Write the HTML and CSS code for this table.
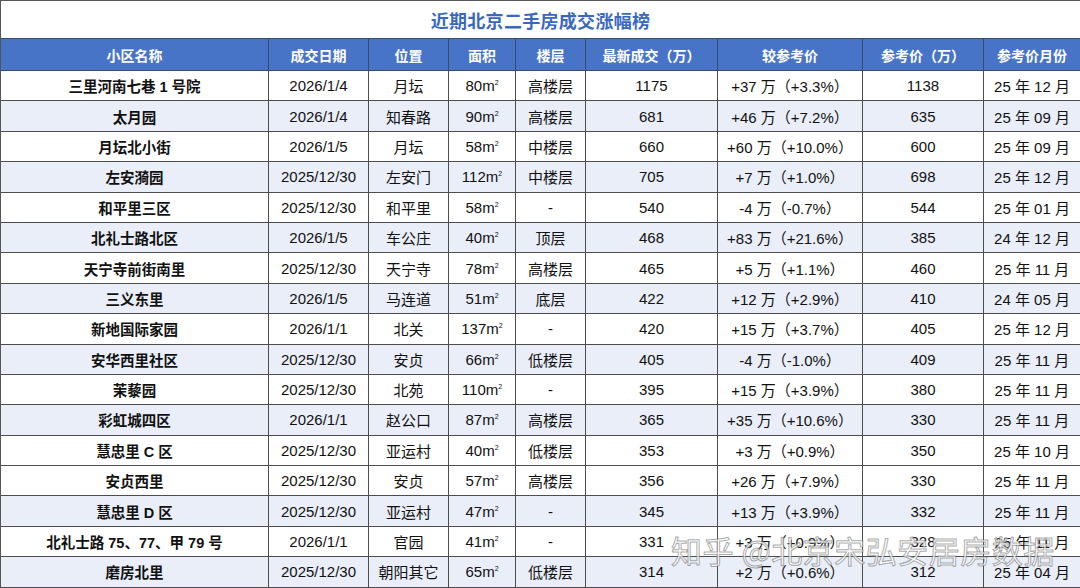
FILE: index.html
```html
<!DOCTYPE html>
<html lang="zh-CN">
<head>
<meta charset="utf-8">
<link rel="stylesheet" href="styles.css">
</head>
<body>
<div class="sheet">
  <div class="title">近期北京二手房成交涨幅榜</div>
  <table class="grid">
    <colgroup>
      <col class="c1"><col class="c2"><col class="c3"><col class="c4"><col class="c5"><col class="c6"><col class="c7"><col class="c8"><col class="c9">
    </colgroup>
    <thead>
      <tr><th>小区名称</th><th>成交日期</th><th>位置</th><th>面积</th><th>楼层</th><th>最新成交（万）</th><th>较参考价</th><th>参考价（万）</th><th>参考价月份</th></tr>
    </thead>
    <tbody>
      <tr><td class="name">三里河南七巷 1 号院</td><td>2026/1/4</td><td>月坛</td><td>80m<sup>2</sup></td><td>高楼层</td><td>1175</td><td>+37 万（+3.3%）</td><td>1138</td><td>25 年 12 月</td></tr>
      <tr class="alt"><td class="name">太月园</td><td>2026/1/4</td><td>知春路</td><td>90m<sup>2</sup></td><td>高楼层</td><td>681</td><td>+46 万（+7.2%）</td><td>635</td><td>25 年 09 月</td></tr>
      <tr><td class="name">月坛北小街</td><td>2026/1/5</td><td>月坛</td><td>58m<sup>2</sup></td><td>中楼层</td><td>660</td><td>+60 万（+10.0%）</td><td>600</td><td>25 年 09 月</td></tr>
      <tr class="alt"><td class="name">左安漪园</td><td>2025/12/30</td><td>左安门</td><td>112m<sup>2</sup></td><td>中楼层</td><td>705</td><td>+7 万（+1.0%）</td><td>698</td><td>25 年 12 月</td></tr>
      <tr><td class="name">和平里三区</td><td>2025/12/30</td><td>和平里</td><td>58m<sup>2</sup></td><td>-</td><td>540</td><td>-4 万（-0.7%）</td><td>544</td><td>25 年 01 月</td></tr>
      <tr class="alt"><td class="name">北礼士路北区</td><td>2026/1/5</td><td>车公庄</td><td>40m<sup>2</sup></td><td>顶层</td><td>468</td><td>+83 万（+21.6%）</td><td>385</td><td>24 年 12 月</td></tr>
      <tr><td class="name">天宁寺前街南里</td><td>2025/12/30</td><td>天宁寺</td><td>78m<sup>2</sup></td><td>高楼层</td><td>465</td><td>+5 万（+1.1%）</td><td>460</td><td>25 年 11 月</td></tr>
      <tr class="alt"><td class="name">三义东里</td><td>2026/1/5</td><td>马连道</td><td>51m<sup>2</sup></td><td>底层</td><td>422</td><td>+12 万（+2.9%）</td><td>410</td><td>24 年 05 月</td></tr>
      <tr><td class="name">新地国际家园</td><td>2026/1/1</td><td>北关</td><td>137m<sup>2</sup></td><td>-</td><td>420</td><td>+15 万（+3.7%）</td><td>405</td><td>25 年 12 月</td></tr>
      <tr class="alt"><td class="name">安华西里社区</td><td>2025/12/30</td><td>安贞</td><td>66m<sup>2</sup></td><td>低楼层</td><td>405</td><td>-4 万（-1.0%）</td><td>409</td><td>25 年 11 月</td></tr>
      <tr><td class="name">茉藜园</td><td>2025/12/30</td><td>北苑</td><td>110m<sup>2</sup></td><td>-</td><td>395</td><td>+15 万（+3.9%）</td><td>380</td><td>25 年 11 月</td></tr>
      <tr class="alt"><td class="name">彩虹城四区</td><td>2026/1/1</td><td>赵公口</td><td>87m<sup>2</sup></td><td>高楼层</td><td>365</td><td>+35 万（+10.6%）</td><td>330</td><td>25 年 11 月</td></tr>
      <tr><td class="name">慧忠里 C 区</td><td>2025/12/30</td><td>亚运村</td><td>40m<sup>2</sup></td><td>低楼层</td><td>353</td><td>+3 万（+0.9%）</td><td>350</td><td>25 年 10 月</td></tr>
      <tr><td class="name">安贞西里</td><td>2025/12/30</td><td>安贞</td><td>57m<sup>2</sup></td><td>高楼层</td><td>356</td><td>+26 万（+7.9%）</td><td>330</td><td>25 年 11 月</td></tr>
      <tr class="alt"><td class="name">慧忠里 D 区</td><td>2025/12/30</td><td>亚运村</td><td>47m<sup>2</sup></td><td>-</td><td>345</td><td>+13 万（+3.9%）</td><td>332</td><td>25 年 11 月</td></tr>
      <tr><td class="name">北礼士路 75、77、甲 79 号</td><td>2026/1/1</td><td>官园</td><td>41m<sup>2</sup></td><td>-</td><td>331</td><td>+3 万（+0.9%）</td><td>328</td><td>25 年 11 月</td></tr>
      <tr class="alt"><td class="name">磨房北里</td><td>2025/12/30</td><td>朝阳其它</td><td>65m<sup>2</sup></td><td>低楼层</td><td>314</td><td>+2 万（+0.6%）</td><td>312</td><td>25 年 04 月</td></tr>
    </tbody>
  </table>
  <div class="watermark">知乎 @北京宋弘安居房数据</div>
</div>
</body>
</html>
```
FILE: styles.css
```css
html, body {
  margin: 0;
  padding: 0;
  background: #ffffff;
}
body {
  font-family: "Liberation Sans", "Noto Sans CJK SC", sans-serif;
  color: #111;
}
.sheet {
  position: relative;
  width: 1080px;
  height: 588px;
  box-sizing: border-box;
  border-left: 1px solid #555;
  border-top: 1px solid #555;
  overflow: hidden;
}
.title {
  height: 37px;
  display: flex;
  align-items: center;
  justify-content: center;
  font-size: 18px;
  font-weight: bold;
  color: #3a68c0;
  letter-spacing: 0.3px;
}
.grid {
  width: 1080px;
  border-collapse: collapse;
  table-layout: fixed;
  margin-left: -1px;
}
.c1 { width: 268px; }
.c2 { width: 100px; }
.c3 { width: 80px; }
.c4 { width: 67px; }
.c5 { width: 70px; }
.c6 { width: 132px; }
.c7 { width: 145px; }
.c8 { width: 121px; }
.c9 { width: 97px; }
.grid th {
  height: 31px;
  padding: 0;
  background: #4874c8;
  color: #fff;
  font-size: 14px;
  font-weight: bold;
  border: 1px solid #3a4a6a;
  text-align: center;
}
.grid td {
  height: 29.4px;
  padding: 0;
  font-size: 15px;
  text-align: center;
  border: 1px solid #4d4d4d;
  white-space: nowrap;
}
.grid td.name {
  font-size: 14.5px;
  font-weight: bold;
}
.grid tr.alt td {
  background: #e9eef9;
}
.grid sup {
  font-size: 7px;
  vertical-align: 6px;
  line-height: 0;
}
.watermark {
  position: absolute;
  left: 670px;
  top: 526px;
  font-size: 31px;
  font-family: "Noto Sans CJK SC", sans-serif;
  color: rgba(255, 255, 255, 0.75);
  -webkit-text-stroke: 1px rgba(110, 110, 110, 0.6);
  letter-spacing: 0.5px;
  white-space: nowrap;
  pointer-events: none;
}
```
